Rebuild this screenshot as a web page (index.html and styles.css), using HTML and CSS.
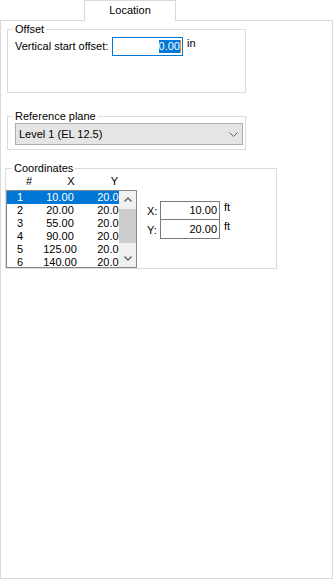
FILE: index.html
```html
<!DOCTYPE html>
<html lang="en">
<head>
    <meta charset="UTF-8">
    <meta name="viewport" content="width=device-width, initial-scale=1.0">
    <title>Location</title>
    <link rel="stylesheet" href="styles.css">
</head>
<body>

<div class="tab-strip">
    <div class="tab">Location</div>
</div>

<div class="tab-page">
    <fieldset class="group group-offset">
        <legend>Offset</legend>
        <div class="field-row">
            <label class="field-label" for="startOffset">Vertical start offset:</label>
            <div class="textbox textbox-focus" id="startOffset"><span class="sel">0.00</span><span class="caret"></span></div>
            <span class="unit">in</span>
        </div>
    </fieldset>

    <fieldset class="group group-plane">
        <legend>Reference plane</legend>
        <div class="combo">
            <span>Level 1 (EL 12.5)</span>
            <svg width="9" height="5" viewBox="0 0 9 5"><polyline points="0.5,0.5 4.5,4.5 8.5,0.5" fill="none" stroke="#606060" stroke-width="1"/></svg>
        </div>
    </fieldset>

    <fieldset class="group group-coords">
        <legend>Coordinates</legend>
        <div class="coord-head">
            <span>#</span>
            <span>X</span>
            <span>Y</span>
        </div>
        <div class="coord-body">
            <div class="listbox">
                <div class="rows">
                    <div class="row selected"><span>1</span><span>10.00</span><span>20.00</span></div>
                    <div class="row"><span>2</span><span>20.00</span><span>20.00</span></div>
                    <div class="row"><span>3</span><span>55.00</span><span>20.00</span></div>
                    <div class="row"><span>4</span><span>90.00</span><span>20.00</span></div>
                    <div class="row"><span>5</span><span>125.00</span><span>20.00</span></div>
                    <div class="row"><span>6</span><span>140.00</span><span>20.00</span></div>
                </div>
                <div class="vscroll">
                    <div class="arrow">
                        <svg width="8" height="5" viewBox="0 0 8 5"><polyline points="0.5,4.5 4,1 7.5,4.5" fill="none" stroke="#606060" stroke-width="1.4"/></svg>
                    </div>
                    <div class="track"><div class="thumb"></div></div>
                    <div class="arrow">
                        <svg width="8" height="5" viewBox="0 0 8 5"><polyline points="0.5,0.5 4,4 7.5,0.5" fill="none" stroke="#606060" stroke-width="1.4"/></svg>
                    </div>
                </div>
            </div>
            <div class="point-edit">
                <label class="point-label">X:</label>
                <div class="textbox point-box">10.00</div>
                <span class="unit">ft</span>
                <label class="point-label">Y:</label>
                <div class="textbox point-box point-box-next">20.00</div>
                <span class="unit">ft</span>
            </div>
        </div>
    </fieldset>
</div>

</body>
</html>
```

FILE: styles.css
```css
body {
    margin: 0;
    background-color: white;
    font-family: "Liberation Sans", Arial, sans-serif;
    font-size: 11px;
    color: #000;
}
.tab-strip {
    display: flex;
    height: 20px;
    padding-left: 84px;
}
.tab {
    position: relative;
    z-index: 1;
    width: 90px;
    height: 20px;
    border: 1px solid #d9d9d9;
    border-bottom: none;
    background-color: white;
    text-align: center;
    line-height: 19px;
}
.tab-page {
    height: 557px;
    border: 1px solid #d9d9d9;
}
.group {
    box-sizing: border-box;
    margin: 0;
    padding: 0;
    min-width: 0;
    border: 1px solid #dcdcdc;
}
.group legend {
    margin-left: -2px;
    padding: 0 2px;
    line-height: 13px;
}
.group-offset {
    width: 239px;
    margin: 2px 0 0 6px;
    padding: 1px 0 36px 7px;
}
.field-row {
    display: flex;
    align-items: center;
}
.field-label {
    width: 97px;
    line-height: 13px;
}
.textbox {
    box-sizing: border-box;
    border: 1px solid #7a7a7a;
    background-color: white;
    text-align: right;
}
.textbox-focus {
    display: flex;
    justify-content: flex-end;
    align-items: center;
    width: 71px;
    height: 19px;
    padding-right: 1px;
    border-color: #0078d7;
}
.sel {
    background-color: #0078d7;
    color: white;
    line-height: 13px;
}
.caret {
    width: 1px;
    height: 13px;
    background-color: #ff8728;
}
.unit {
    align-self: flex-start;
    margin-left: 4px;
    line-height: 13px;
}
.group-plane {
    width: 239px;
    margin: 17px 0 0 6px;
    padding: 0 0 4px 7px;
}
.combo {
    box-sizing: border-box;
    display: flex;
    justify-content: space-between;
    align-items: center;
    width: 228px;
    height: 22px;
    padding: 0 4px 0 3px;
    background-color: #e5e5e5;
    border: 1px solid #adadad;
}
.group-coords {
    width: 272px;
    margin: 12px 0 0 4px;
    padding: 0;
}
.group-coords legend {
    margin-left: 6px;
}
.coord-head {
    display: grid;
    grid-template-columns: 46px 38px 49px;
    margin-bottom: 2px;
    line-height: 13px;
    text-align: center;
}
.coord-body {
    display: flex;
    align-items: flex-start;
}
.listbox {
    display: flex;
    box-sizing: border-box;
    width: 131px;
    height: 78px;
    border: 1px solid #828790;
}
.rows {
    width: 112px;
    overflow: hidden;
}
.row {
    display: grid;
    grid-template-columns: 33px 40px 62px;
    height: 13px;
    line-height: 13px;
    white-space: nowrap;
}
.row span {
    text-align: center;
}
.row span:first-child {
    padding-left: 10px;
    text-align: left;
}
.row.selected {
    background-color: #0078d7;
    color: white;
}
.vscroll {
    display: flex;
    flex-direction: column;
    width: 17px;
    background-color: #f0f0f0;
}
.arrow {
    display: flex;
    justify-content: center;
    align-items: center;
    height: 17px;
}
.track {
    flex: 1;
}
.thumb {
    height: 34px;
    margin: 1px 0 0 0;
    background-color: #cdcdcd;
}
.point-edit {
    display: grid;
    grid-template-columns: 13px 60px auto;
    margin: 11px 0 0 10px;
}
.point-label {
    padding-top: 4px;
    line-height: 13px;
}
.point-box {
    height: 19px;
    padding-right: 2px;
    line-height: 17px;
}
.point-box-next {
    border-top: none;
    height: 19px;
    line-height: 18px;
}
```
